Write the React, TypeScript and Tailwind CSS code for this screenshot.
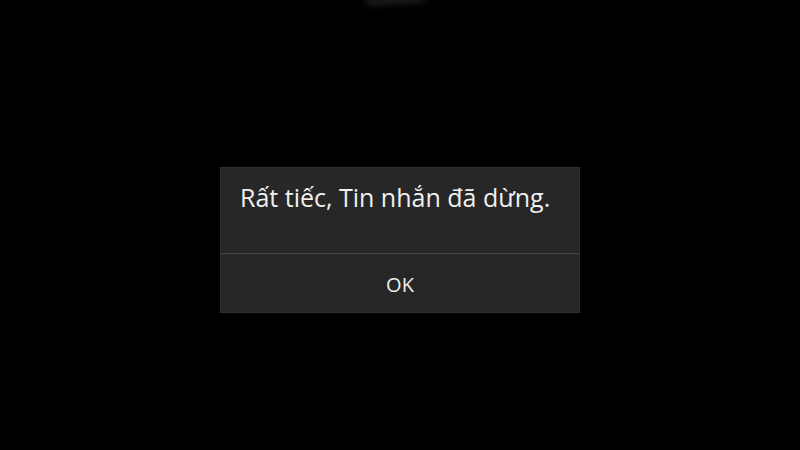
export default function App() {
  return (
    <div className="relative w-[800px] h-[450px] bg-black overflow-hidden" style={{ fontFamily: '"Open Sans", "Noto Sans", sans-serif' }}>
      <div className="absolute left-[365px] top-[-3px] w-[60px] h-[7px] rounded-full bg-[#1e1e1e] blur-[3px] -rotate-3" />
      <div className="flex h-full items-start justify-center pt-[167px]">
        <div className="w-[360px] bg-[#272727] border border-[#2f2f2f] flex flex-col">
          <div className="h-[85px] flex items-start pl-[19px] pt-[13px]">
            <span className="text-[25px] leading-[32px] text-[#f0f0f0]">Rất tiếc, Tin nhắn đã dừng.</span>
          </div>
          <div className="h-[1px] bg-[#444444]" />
          <div className="h-[58px] flex items-center justify-center pt-[3px]">
            <span className="text-[20px] text-[#eeeeee]">OK</span>
          </div>
        </div>
      </div>
    </div>
  )
}
